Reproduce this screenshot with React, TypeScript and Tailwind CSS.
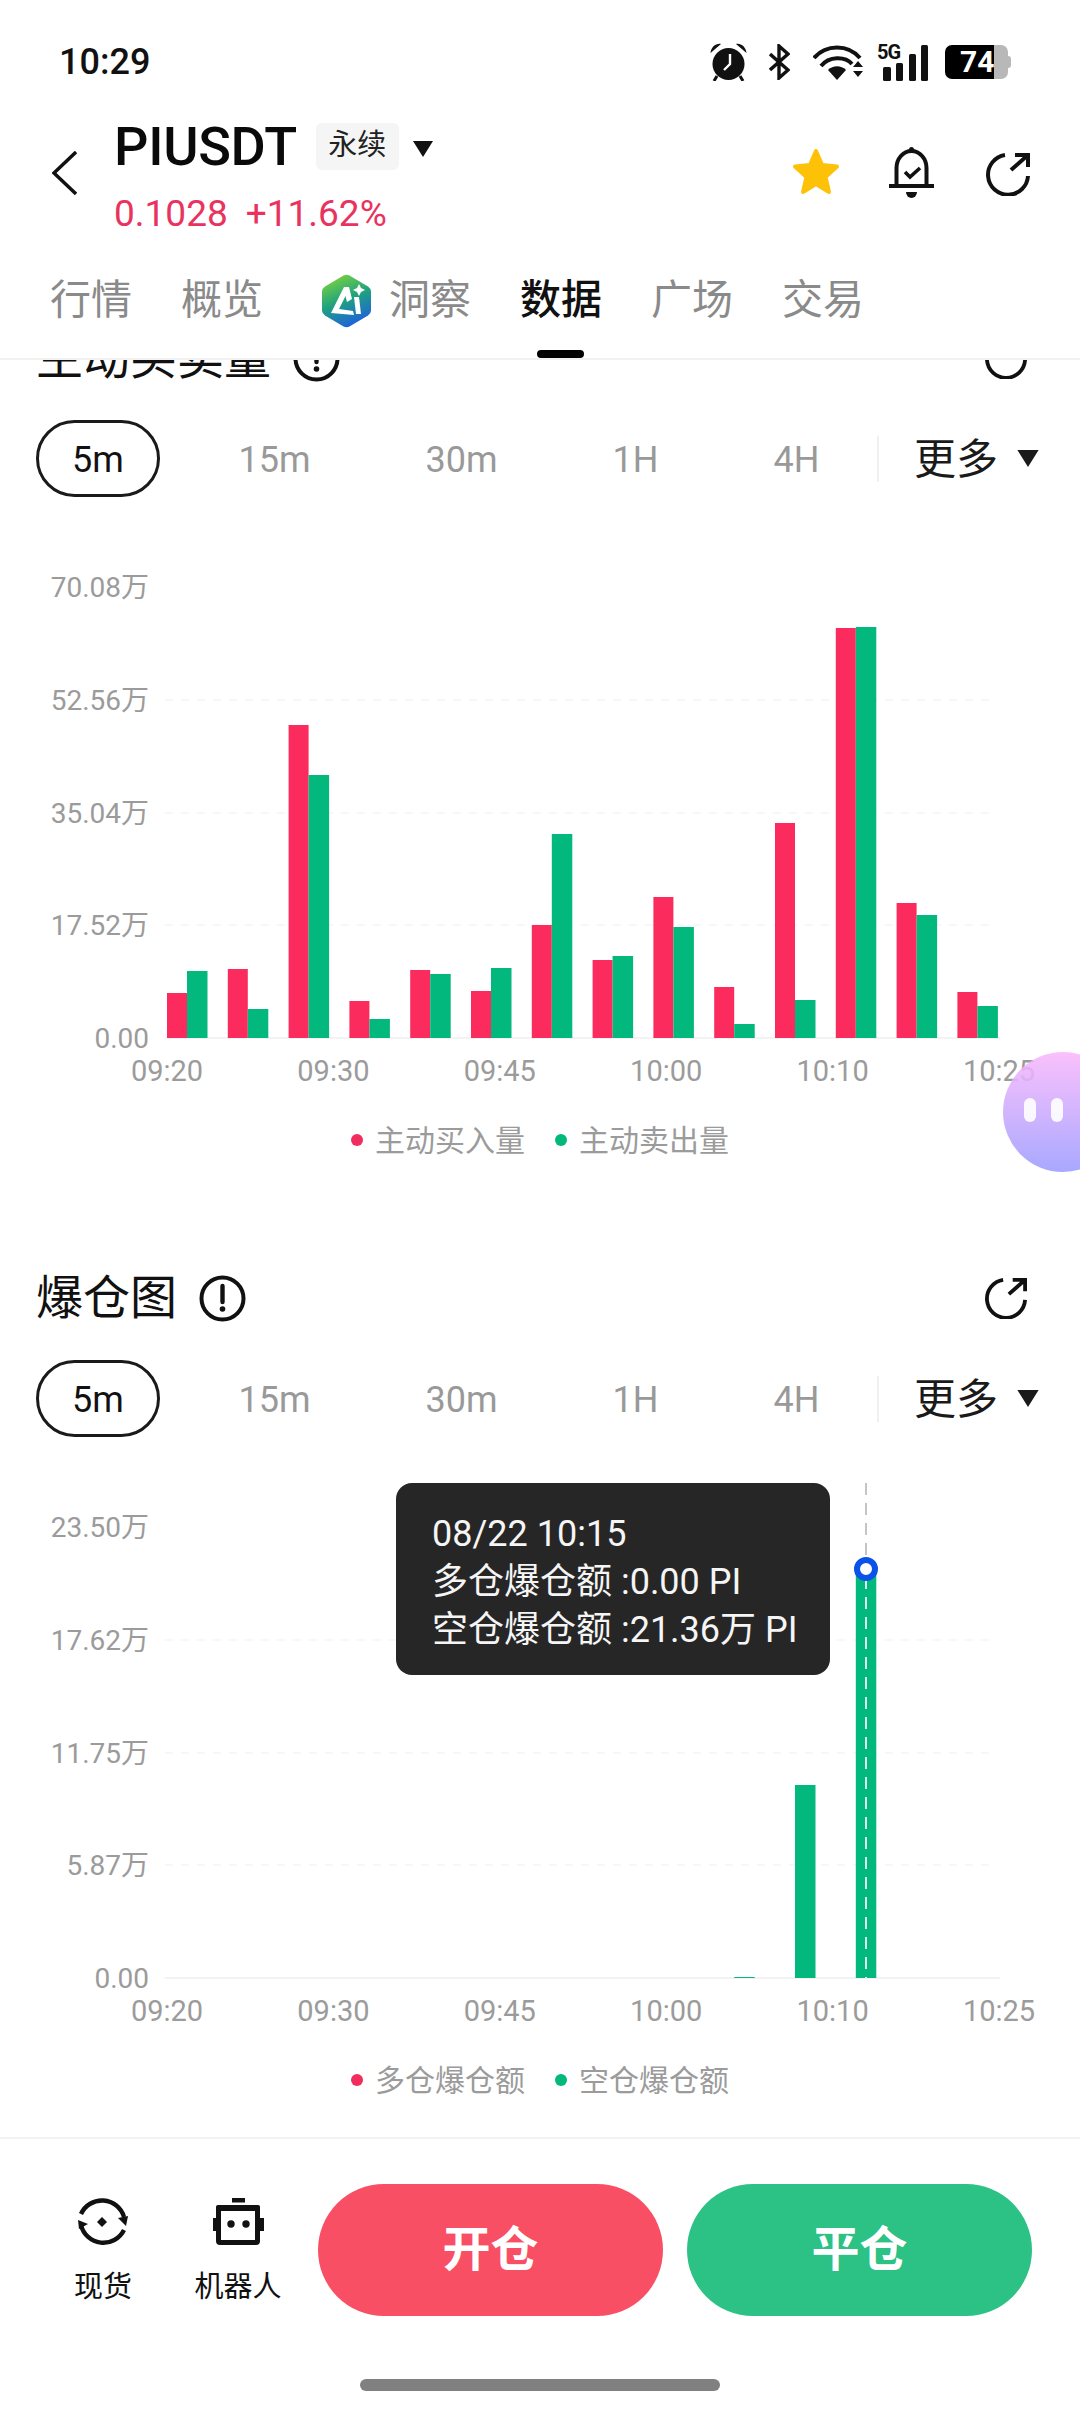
import React from "react";

const RED = "#fb2c5d";
const GREEN = "#03b87c";

const buyBars = [45, 69, 313, 37, 68, 47, 113, 78, 141, 51, 215, 410, 135, 46];
const sellBars = [67, 29, 263, 19, 64, 70, 204, 82, 111, 14, 38, 411, 123, 32];
const liqBars = [0, 0, 0, 0, 0, 0, 0, 0, 0, 1, 193, 404, 0, 0];

const xLabels = ["09:20", "09:30", "09:45", "10:00", "10:10", "10:25"];
const periods = ["15m", "30m", "1H", "4H"];

const barX = (i: number) => 167 + i * 60.8;

const Caret = ({ className }: { className: string }) => (
  <svg viewBox="0 0 20 16" className={className}>
    <path d="M0 0H20L10 16Z" fill="currentColor" />
  </svg>
);

const ShareIcon = ({ className }: { className: string }) => (
  <svg viewBox="0 0 44 44" fill="none" stroke="#111" strokeWidth="4" className={className}>
    <path d="M19 3A20 20 0 1 0 42 24" />
    <path d="M29 3H42V15M42 3L25 18" />
  </svg>
);

const InfoIcon = () => (
  <svg viewBox="0 0 47 47" className="h-[47px] w-[47px] shrink-0">
    <circle cx="23.5" cy="23.5" r="21" fill="none" stroke="#111" strokeWidth="4" />
    <path d="M23.5 11V27" stroke="#111" strokeWidth="4.4" strokeLinecap="round" />
    <circle cx="23.5" cy="34" r="2.8" fill="#111" />
  </svg>
);

const StatusIcons = () => (
  <div className="flex items-center">
    <svg viewBox="0 0 37 38" className="h-[38px] w-[37px]">
      <circle cx="18.5" cy="21" r="16" fill="#111" />
      <path d="M0.5 10C1 4 6 0 11 1Z M36.5 10C36 4 31 0 26 1Z" fill="#111" />
      <path d="M7 33L4 38M30 33L33 38" stroke="#111" strokeWidth="3" />
      <path d="M20 11V21L14 27" stroke="#fff" strokeWidth="2.4" fill="none" />
    </svg>
    <svg viewBox="0 0 21 36" fill="none" stroke="#111" strokeWidth="3.4" className="ml-[22px] h-[36px] w-[21px]">
      <path d="M1 10L19 26L10 34V2L19 10L1 26" />
    </svg>
    <svg viewBox="0 0 51 35" className="ml-[23px] h-[35px] w-[51px]">
      <g fill="none" stroke="#111" strokeWidth="4">
        <path d="M1 13C13 -1 35 -1 47 13" />
        <path d="M8 21C16 11 32 11 39 19" />
      </g>
      <path d="M15 25C20 20 28 20 33 25L24 35Z" fill="#111" />
      <path d="M40 22L45 16L50 22Z M40 26H50L45 32Z" fill="#111" />
    </svg>
    <div className="relative ml-[13px] h-[37px] w-[51px]">
      <svg viewBox="0 0 51 37" className="h-[37px] w-[51px]">
        <rect x="6" y="23" width="8" height="14" rx="1.5" fill="#111" />
        <rect x="19" y="19" width="7" height="18" rx="1.5" fill="#111" />
        <rect x="32" y="10" width="7" height="27" rx="1.5" fill="#111" />
        <rect x="44" y="1" width="7" height="36" rx="1.5" fill="#111" />
      </svg>
      <span className="absolute left-0 top-0 text-[20px] font-bold leading-[17px] tracking-[-1px] text-[#111]">5G</span>
    </div>
    <div className="relative ml-[17px] flex h-[34px] w-[66px] items-center">
      <div className="h-[34px] w-[49px] rounded-l-[7px] bg-black" />
      <div className="h-[34px] w-[14px] rounded-r-[7px] bg-[#b8b8b8]" />
      <div className="h-[12px] w-[3px] rounded-r-[3px] bg-[#b8b8b8]" />
      <span className="absolute left-[15px] top-0 flex h-[34px] items-center text-[30px] font-bold leading-none text-white">74</span>
    </div>
  </div>
);

const AiLogo = () => (
  <svg viewBox="0 0 49 54" className="ml-[10px] h-[54px] w-[49px] shrink-0">
    <defs>
      <linearGradient id="aiGrad" x1="0.2" y1="0" x2="0.6" y2="1">
        <stop offset="0" stopColor="#7fd63a" />
        <stop offset="0.5" stopColor="#1fa27e" />
        <stop offset="1" stopColor="#1e5fe0" />
      </linearGradient>
    </defs>
    <path
      d="M21.5 1.5Q24.5 0 27.5 1.5L46 12.5Q49 14.5 49 17.5V36.5Q49 39.5 46 41.5L27.5 52.5Q24.5 54 21.5 52.5L3 41.5Q0 39.5 0 36.5V17.5Q0 14.5 3 12.5Z"
      fill="url(#aiGrad)"
    />
    <path d="M9 39L22 13H27L30 25L25 28L23.5 22L17 35L31 37L32 41Z" fill="#fff" />
    <path d="M32 23H37L39 40H34Z" fill="#fff" />
    <path d="M37 10L39 14L43 16L39 18L37 22L35 18L31 16L35 14Z" fill="#fff" />
  </svg>
);

const Header = () => (
  <div className="flex h-[118px] items-start">
    <svg viewBox="0 0 25 44" fill="none" stroke="#111" strokeWidth="3.4" className="ml-[52px] mt-[29px] h-[44px] w-[25px] shrink-0">
      <path d="M24 1L2 22L24 43" />
    </svg>
    <div className="ml-[37px]">
      <div className="flex h-[48px] items-center">
        <span className="text-[54px] font-medium tracking-[-0.3px] text-[#0a0a0a]">PIUSDT</span>
        <span className="ml-[19px] flex h-[47px] w-[83px] items-center justify-center rounded-[6px] bg-[#f5f5f5] text-[29px] text-[#222]">永续</span>
        <Caret className="ml-[14px] mt-[6px] h-[16px] w-[20px] text-[#111]" />
      </div>
      <div className="mt-[24px] flex h-[40px] items-center text-[37px] text-[#e9335f]">
        <span>0.1028</span>
        <span className="ml-[18px]">+11.62%</span>
      </div>
    </div>
    <div className="ml-auto mr-[50px] mt-[25px] flex items-start">
      <svg viewBox="0 0 50 50" className="h-[50px] w-[50px]">
        <path
          d="M25 4L31 18L46 19.5L34.5 30L38 45L25 37L12 45L15.5 30L4 19.5L19 18Z"
          fill="#fdc107"
          stroke="#fdc107"
          strokeWidth="4"
          strokeLinejoin="round"
        />
      </svg>
      <svg viewBox="0 0 45 51" fill="none" stroke="#111" strokeWidth="4" className="ml-[48px] h-[51px] w-[45px]">
        <path d="M7.5 39V21A15 17 0 0 1 37.5 21V39" />
        <path d="M0 39H45" />
        <circle cx="22.5" cy="2.5" r="2.5" fill="#111" stroke="none" />
        <path d="M17 45H28A5.5 6 0 0 1 17 45Z" fill="#111" stroke="none" />
        <path d="M16 25L21 30L31 21" strokeWidth="3.6" />
      </svg>
      <ShareIcon className="ml-[52px] mt-[5px] h-[44px] w-[44px]" />
    </div>
  </div>
);

const Tabs = () => (
  <div className="flex h-[120px] items-center gap-[49px] border-b-2 border-[#f1f1f1] pl-[50px] pt-[4px] text-[41px] text-[#8a8a8a]">
    <span>行情</span>
    <span>概览</span>
    <div className="flex items-center gap-[18px]">
      <AiLogo />
      <span>洞察</span>
    </div>
    <div className="relative font-medium text-[#111]">
      数据
      <div className="absolute bottom-[-26px] left-[17px] h-[8px] w-[47px] rounded-full bg-black" />
    </div>
    <span>广场</span>
    <span>交易</span>
  </div>
);

const PeriodRow = () => (
  <div className="mt-[32px] flex h-[77px] items-center pl-[36px] text-[36px]">
    <div className="flex h-[77px] w-[124px] items-center justify-center rounded-full border-[3px] border-[#1a1a1a] pt-[2px] text-[#111]">5m</div>
    <div className="ml-[21px] flex pt-[3px] text-[#999]">
      {periods.map((p) => (
        <span key={p} className="px-[57.5px]">
          {p}
        </span>
      ))}
    </div>
    <div className="h-[46px] w-[2px] bg-[#f0f0f0]" />
    <span className="ml-[35px] pt-[2px] text-[42px] leading-none text-[#1a1a1a]">更多</span>
    <Caret className="ml-[19px] h-[17px] w-[22px] text-[#1a1a1a]" />
  </div>
);

type ChartProps = {
  yLabels: string[];
  red: number[];
  green: number[];
  legend: [string, string];
  children?: React.ReactNode;
};

const Chart = ({ yLabels, red, green, legend, children }: ChartProps) => {
  const gridY = [90, 203, 316, 428, 541];
  return (
    <div>
      <div className="relative h-[600px]">
        <svg viewBox="0 0 1080 600" className="block h-[600px] w-[1080px]">
          {gridY.slice(1, 4).map((y) => (
            <line key={y} x1="165" x2="992" y1={y} y2={y} stroke="#f5f5f5" strokeWidth="1.5" strokeDasharray="8 8" />
          ))}
          <line x1="165" x2="1000" y1="541" y2="541" stroke="#f3f3f3" strokeWidth="2" />
          {red.map((h, i) =>
            h > 0 ? <rect key={"r" + i} x={barX(i)} y={541 - h} width="20" height={h} fill={RED} /> : null
          )}
          {green.map((h, i) =>
            h > 0 ? <rect key={"g" + i} x={barX(i) + 20} y={541 - h} width="20.5" height={h} fill={GREEN} /> : null
          )}
          {yLabels.map((label, i) => (
            <text key={label} x="149" y={gridY[i]} textAnchor="end" dominantBaseline="central" className="fill-[#9b9b9b] text-[28px]">
              {label}
            </text>
          ))}
          {xLabels.map((label, i) => (
            <text key={label} x={167 + i * 166.4} y="574" textAnchor="middle" dominantBaseline="central" className="fill-[#9b9b9b] text-[29px]">
              {label}
            </text>
          ))}
          {children ? (
            <g>
              <line x1="866" x2="866" y1="46" y2="132" stroke="#c4c4c4" strokeWidth="2" strokeDasharray="12 8" />
              <line x1="866" x2="866" y1="140" y2="541" stroke="#d9f5ea" strokeWidth="2" strokeDasharray="12 8" />
              <circle cx="866" cy="132" r="9" fill="#fff" stroke="#0a52e8" strokeWidth="6" />
            </g>
          ) : null}
        </svg>
        {children}
      </div>
      <div className="flex h-[86px] items-center justify-center text-[30px] text-[#9b9b9b]">
        <span className="h-[12px] w-[12px] rounded-full bg-[#f02d5e]" />
        <span className="ml-[12px]">{legend[0]}</span>
        <span className="ml-[30px] h-[12px] w-[12px] rounded-full bg-[#03b87c]" />
        <span className="ml-[12px]">{legend[1]}</span>
      </div>
    </div>
  );
};

const Section = ({ title, children }: { title: string; children: React.ReactNode }) => (
  <section className="mb-[85px]">
    <div className="flex h-[60px] items-center pl-[36px] pr-[53px]">
      <h2 className="text-[47px] text-[#111]">{title}</h2>
      <div className="ml-[22px]">
        <InfoIcon />
      </div>
      <ShareIcon className="ml-auto h-[42px] w-[42px]" />
    </div>
    <PeriodRow />
    {children}
  </section>
);

const ExchangeIcon = () => (
  <svg viewBox="0 0 50 50" fill="none" stroke="#111" strokeWidth="4.4" className="h-[50px] w-[50px]">
    <path d="M3 17A23 23 0 0 1 46 20" />
    <path d="M46 33A23 23 0 0 1 3 28" />
    <path d="M40 21L50 19L48 29Z" fill="#111" stroke="none" />
    <path d="M0 23L10 27L1 32Z" fill="#111" stroke="none" />
    <path d="M24 20L29 25L24 30L19 25Z" fill="#111" stroke="none" />
  </svg>
);

const RobotIcon = () => (
  <svg viewBox="0 0 51 47" className="h-[47px] w-[51px]">
    <rect x="19" y="0" width="13" height="4.5" fill="#111" />
    <rect x="5.5" y="9.5" width="39" height="35" rx="1.5" fill="none" stroke="#111" strokeWidth="5" />
    <rect x="3" y="7" width="44" height="6" rx="2" fill="#111" />
    <rect x="0" y="20" width="4" height="13" fill="#111" />
    <rect x="47" y="20" width="4" height="13" fill="#111" />
    <circle cx="18" cy="26" r="3.7" fill="#111" />
    <circle cx="33" cy="26" r="3.7" fill="#111" />
  </svg>
);

const BottomBar = () => (
  <div className="h-[275px] shrink-0 border-t-2 border-[#f2f2f2] bg-white">
    <div className="flex pl-[73px] pt-[45px]">
      <div className="flex w-[60px] flex-col items-center pt-[13px]">
        <ExchangeIcon />
        <span className="mt-[22px] text-[29px] leading-[36px] text-[#111]">现货</span>
      </div>
      <div className="ml-[60px] flex w-[90px] flex-col items-center pt-[14px]">
        <RobotIcon />
        <span className="mt-[24px] text-[29px] leading-[36px] text-[#111]">机器人</span>
      </div>
      <button className="ml-[35px] flex h-[132px] w-[345px] items-center justify-center rounded-full bg-[#f94f64] text-[48px] font-bold text-white">开仓</button>
      <button className="ml-[24px] flex h-[132px] w-[345px] items-center justify-center rounded-full bg-[#2cc185] text-[48px] font-bold text-white">平仓</button>
    </div>
    <div className="mx-auto mt-[63px] h-[12px] w-[360px] rounded-full bg-[#808080]" />
  </div>
);

const App = () => (
  <div className="relative flex h-[2412px] w-[1080px] flex-col overflow-hidden bg-white font-[Roboto,'Noto_Sans_CJK_SC',sans-serif]">
    <div className="relative z-10 shrink-0 bg-white">
      <div className="flex h-[122px] items-center justify-between pl-[59px] pr-[69px] pt-[2px]">
        <span className="text-[36px] font-medium text-[#111]">10:29</span>
        <StatusIcons />
      </div>
      <Header />
      <Tabs />
    </div>

    <div className="min-h-0 flex-1 overflow-hidden">
      <div className="mt-[-32px]">
        <Section title="主动买卖量">
          <Chart
            yLabels={["70.08万", "52.56万", "35.04万", "17.52万", "0.00"]}
            red={buyBars}
            green={sellBars}
            legend={["主动买入量", "主动卖出量"]}
          />
        </Section>
        <Section title="爆仓图">
          <Chart
            yLabels={["23.50万", "17.62万", "11.75万", "5.87万", "0.00"]}
            red={[]}
            green={liqBars}
            legend={["多仓爆仓额", "空仓爆仓额"]}
          >
            <div className="absolute left-[396px] top-[46px] flex h-[192px] w-[434px] flex-col justify-center whitespace-pre rounded-[16px] bg-[#262626] pl-[36px] pt-[5px] text-[36px] leading-[48px] text-[#f5f5f5]">
              <span>08/22 10:15</span>
              <span>多仓爆仓额 :0.00 PI</span>
              <span>空仓爆仓额 :21.36万 PI</span>
            </div>
          </Chart>
        </Section>
      </div>
    </div>

    <BottomBar />

    <div className="absolute left-[1003px] top-[1052px] h-[120px] w-[120px] rounded-full bg-gradient-to-b from-[#f9b5fb]/85 to-[#a8a8ff]">
      <div className="absolute left-[21px] top-[46px] h-[24px] w-[12px] rounded-full bg-white/90" />
      <div className="absolute left-[48px] top-[46px] h-[24px] w-[12px] rounded-full bg-white/90" />
    </div>
  </div>
);

export default App;
